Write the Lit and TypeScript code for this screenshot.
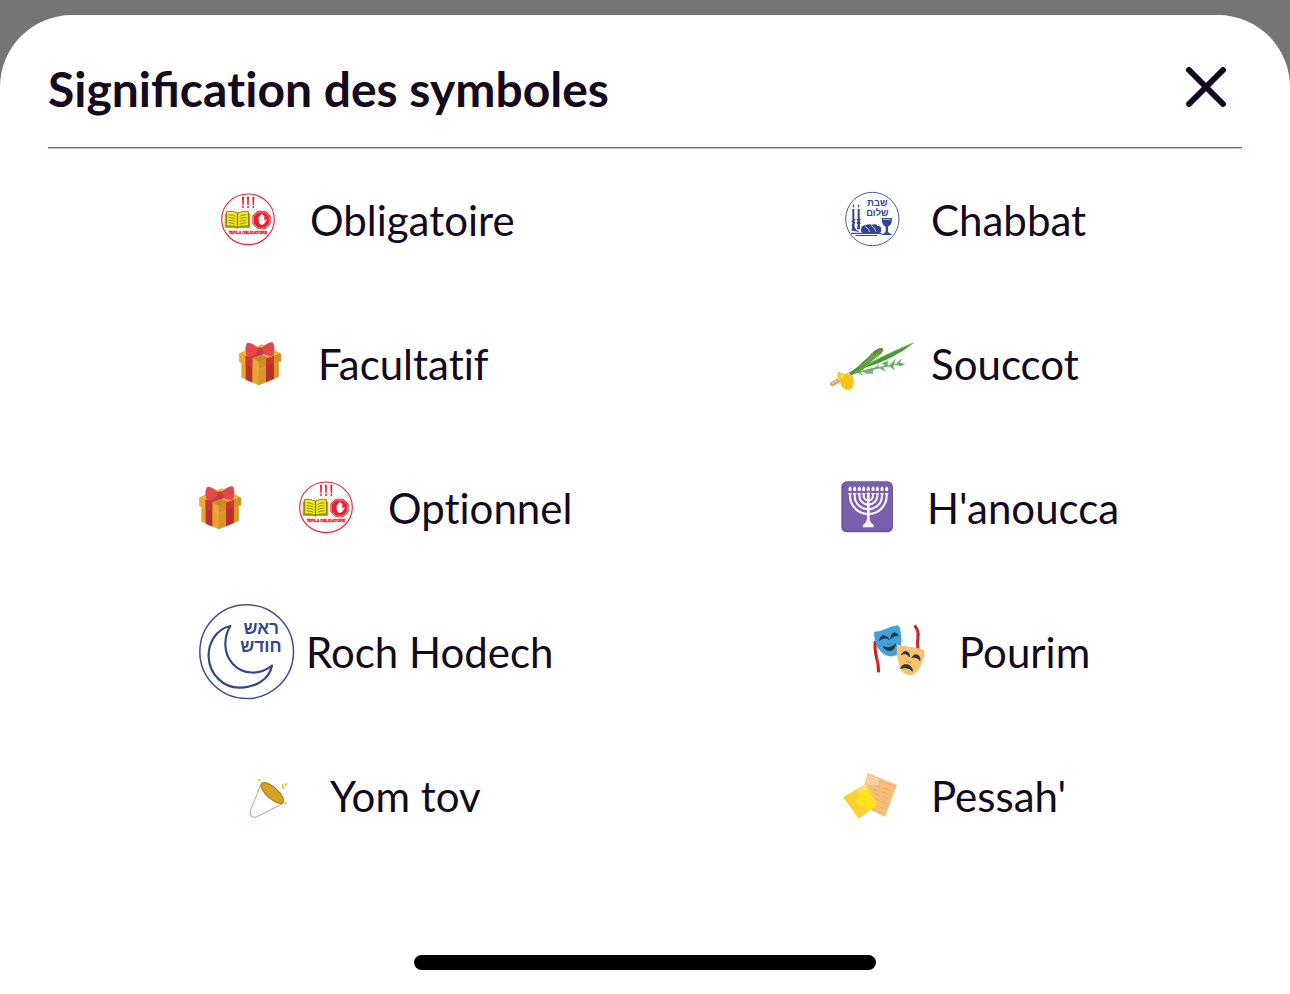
import { LitElement, html, svg, css } from "lit";
import { customElement } from "lit/decorators.js";

const frame = (viewBox: string, body: unknown) => html`
  <svg class="icon" viewBox=${viewBox} aria-hidden="true">${body}</svg>
`;

const tefila = () => frame("-30 -24 288 288", svg`
  <ellipse cx="114" cy="118" rx="79" ry="76" fill="#fff" stroke="#ea2637" stroke-width="3.5"/>
  <g fill="#e51f2f">
    <path d="M96 50h6l-1 25h-4zM111 50h6l-1 25h-4zM127 50h6l-1 25h-4z"/>
    <circle cx="99" cy="81" r="3"/><circle cx="114" cy="81" r="3"/><circle cx="130" cy="81" r="3"/>
    <path d="M143 92h23l16 16v23l-16 16h-23l-16-16v-23z"/>
  </g>
  <path d="M144 96h20l14 14v20l-14 14h-20l-14-14v-20z" fill="none" stroke="#fff" stroke-width="1.5"/>
  <path d="M146 124v-13q2-3 4 0v-5q2-4 4 0v-3q2-3 4 0v4q3-4 5 1v14l4-4q4-1 3 3l-8 11q-10 6-14-2z" fill="#fff"/>
  <path d="M44 101l6-2v-5q20-2 32 5q14-7 33-5v5l6 2v43H87q-5 5-10 0H44z" fill="#b7ab1b"/>
  <path d="M50 94q20-2 32 5v43q-13-7-32-4zM83 99q13-7 32-5v44q-19-3-32 4z" fill="#f6ed20" stroke="#5c5820" stroke-width="2"/>
  <path d="M56 104q10 0 20 5m-20 3q10 0 20 5m-20 3q10 0 20 5m-20 3q10 0 20 5M109 104q-10 0-20 5m20 3q-10 0-20 5m20 3q-10 0-20 5m20 3q-10 0-20 5" fill="none" stroke="#8f8820" stroke-width="3"/>
  <text x="114" y="163" class="stamp" text-anchor="middle">TEFILA OBLIGATOIRE</text>
`);

const chabbat = () => frame("-42 -24 288 288", svg`
  <circle cx="112" cy="117" r="80" fill="#fff" stroke="#4659a0" stroke-width="3"/>
  <text x="127" y="77" class="hebrew small" text-anchor="middle">שבת</text>
  <text x="127" y="107" class="hebrew small" text-anchor="middle">שלום</text>
  <g fill="#34468f">
    <path d="M55 72q5 7 0 12q-5-5 0-12zM71 72q5 7 0 12q-5-5 0-12z"/>
    <path d="M52 87h6v30h4l-4 6 3 6-3 5 2 10 7 8H49l3-8-2-10 3-5-3-6 4-6h-2zM68 87h6v30h4l-4 6 3 6-3 5 2 14H66l2-14-3-5 3-6-4-6h4z"/>
    <path d="M78 148q1-12 14-12q8-6 19-2q12-3 17 3q11 0 11 12q1 9-11 10H86q-10-2-8-11zM48 158h92v4H48zM62 165h65v3H62z"/>
    <path d="M140 114h31q0 22-12 26v15q2 6 11 7v3h-29v-3q9-1 11-7v-15q-12-5-12-26z"/>
  </g>
  <path d="M144 118h23M90 140q12 4 14 16M109 137q11 6 14 18" fill="none" stroke="#dfe4f5" stroke-width="2.5"/>
  <path d="M50 144q9 12 22 10" fill="none" stroke="#34468f" stroke-width="3"/>
`);

const gift = () => frame("-66 -42 288 288", svg`
  <path d="M34 96l52 19 60-22v47l-60 26-52-24z" fill="#e5a52f"/>
  <path d="M86 113l60-22v49l-60 26z" fill="#dc952b"/>
  <path d="M28 69l67-26 58 27v24l-67 22-58-20z" fill="#f0b63c"/>
  <path d="M28 69l58 25v22L28 96z" fill="#eaa934"/>
  <path d="M86 94l67-24v24l-67 22z" fill="#d48d28"/>
  <path d="M47 77l20 9v72l-20-9zM108 86l24-8v69l-24 10z" fill="#b9332d"/>
  <path d="M48 77l47-17 17 5-45 21z" fill="#c93a35"/>
  <path d="M65 85l27-11 25 9-29 12z" fill="#c98928"/>
  <path d="M47 77l20 9v25l-20-7zM108 86l24-8v20l-24 9z" fill="#c93830"/>
  <path d="M85 55C70 42 57 35 51 40c-7 10-6 30 1 39 12 4 22-6 33-10zM93 55c15-14 30-22 36-17 6 9 5 29-1 39-12 3-24-4-35-9z" fill="#e4484d"/>
  <path d="M82 54q9-5 16 0l5 16q-11 13-24 1z" fill="#c93a44"/>
`);

const souccot = () => frame("3 -42 288 288", svg`
  <path d="M29 158l65-35 7 9-61 37q-10 0-11-11z" fill="#d6a575"/>
  <path d="M35 161l55-31" fill="none" stroke="#f3d3ad" stroke-width="4" stroke-dasharray="7 4"/>
  <path d="M88 128l32-22 24-6-16 20-34 16z" fill="#5b8f3f"/>
  <g fill="#69ab64" stroke="#69ab64" stroke-width="1.5" stroke-linejoin="round">
    <path d="M105 130l52-15 90-15-90 19z"/>
    <path d="M149 118l10 11-1-12zM161 116l16-11-5 10zM178 113l18 11-8-12zM190 110l12-15 1 13zM207 107l16 13-5-14zM210 105l16-17-5 16zM225 104l18 3 11-4-15-4zM230 100l15-13-6 12zM128 123l16 10-6-12zM113 127l14 8-7-10zM138 119l7 11 14 0-12-10zM185 101l19-9-9 12z"/>
  </g>
  <path d="M97 130q22-30 50-50q14-20 30-25q15-3 13 6q-8 16-30 28q-26 27-54 40z" fill="#4f9239"/>
  <path d="M115 114l66-50M135 105l42-31M154 85l4-16M164 80l17-7" fill="none" stroke="#7fb552" stroke-width="3"/>
  <path d="M98 132q50-40 186-95q-62 51-148 76z" fill="#409a31"/>
  <path d="M104 127q75-46 174-87" fill="none" stroke="#78ba3e" stroke-width="3"/>
  <path d="M55 125q4-3 7 5 14 0 29 7l7-1q6 14 3 29-2 16-19 15-14-1-19-14l-4-18q-8-6-8-14z" fill="#f3cd18"/>
  <path d="M65 137q20 17 13 40M78 136q17 18 13 38M64 147q7 8 5 19" fill="none" stroke="#dfb115" stroke-width="2.5"/>
  <path d="M60 136l13 1-6 8z" fill="#ffe95b"/>
`);

const hanoucca = () => frame("-39 -30 288 288", svg`
  <rect x="34" y="34" width="155" height="153" rx="17" fill="#6b559f"/>
  <rect x="39" y="36" width="147" height="145" rx="14" fill="#7860ae"/>
  <g fill="none" stroke="#fbf3fb" stroke-width="6.5">
    <path d="M60 72v5a55 55 0 0 0 110 0v-5M74 72v5a41 41 0 0 0 82 0v-5M88 72v5a27 27 0 0 0 54 0v-5M101 72v5a14 14 0 0 0 28 0v-5"/>
    <path d="M115 68v95" stroke-width="8"/>
  </g>
  <g fill="#fbf3fb">
    ${[60, 74, 88, 101, 115, 129, 142, 156, 170].map((x) => svg`
      <path d=${`M${x} 49q8 8 3 14h-6q-5-6 3-14z`}/><rect x=${x - 5} y="69" width="10" height="4"/>
    `)}
    <path d="M111 143h8q1 14 8 18q5 2 5 11H98q0-9 5-11q7-4 8-18z"/>
  </g>
`);

const rochHodech = () => frame("18 27 288 288", svg`
  <circle cx="170" cy="170" r="140.500" fill="#fff" stroke="#3c4d99" stroke-width="4.500"/>
  <path d="M121 93C76 103 54 147 56 187c3 50 43 92 94 91 48-1 88-26 96-66-36 29-88 28-118-6-28-31-28-77-7-113z" fill="none" stroke="#34468f" stroke-width="6.500" stroke-linejoin="round"/>
  <text x="214" y="117" class="hebrew" text-anchor="middle">ראש</text>
  <text x="213" y="171" class="hebrew" text-anchor="middle">חודש</text>
`);

const pourim = () => frame("-48 -33 288 288", svg`
  <path d="M31 78q-3 26 3 46t7 48M149 31q13 18 10 34t0 38" fill="none" stroke="#c51f25" stroke-width="9"/>
  <path d="M36 92l2 58M156 42l1 54" stroke="#e2483e" stroke-width="2"/>
  <path d="M27 50q19 0 34-8t36-11q9 3 10 20 8 52-13 69-15 8-31 1Q28 103 27 50z" fill="#43a2dc"/>
  <path d="M43 78q4-19 16-16 11 3 14 12-9-7-16-4-8 1-14 8zM77 72q1-19 12-19 9 1 11 10-6-3-12 1-4 1-11 8zM54 94q20 9 38-7-4 20-18 20-14 0-20-13z" fill="#24363f" stroke="#24363f" stroke-width="2"/>
  <path d="M66 86q7 7 15-2" fill="none" stroke="#267db5" stroke-width="3"/>
  <path d="M96 88q20 6 41 8t39 8q6 10-1 28-16 47-38 49-20 0-31-19Q92 118 96 88z" fill="#f9c26d"/>
  <path d="M109 120q6-14 17-10 9 4 8 16-6-8-12-9-6-2-13 3zM140 128q8-13 18-8 9 5 7 17-6-9-12-9-7-2-13 0zM107 161q3-14 20-12 14 2 16 20-8-9-18-10-10-2-18 2z" fill="#28343a" stroke="#28343a" stroke-width="2"/>
  <path d="M123 139q7 4 15 4" fill="none" stroke="#cd913e" stroke-width="3"/>
`);

const yomTov = () => frame("-45 -51 288 288", svg`
  <path d="M78 58L46 137q-3 24 18 19l81-41" fill="#fff" stroke="#bd8962" stroke-width="2.5"/>
  <ellipse cx="112" cy="84" rx="43" ry="17" transform="rotate(42 112 84)" fill="#d5a122" stroke="#a77522" stroke-width="3"/>
  <path d="M142 57l4 15M155 54l-4 9" stroke="#edbd28" stroke-width="5"/>
  <circle cx="73" cy="45" r="4" fill="#f7c92f"/><circle cx="151" cy="114" r="4" fill="#f7c92f"/>
`);

const pessah = () => frame("-42 -42 288 288", svg`
  <path d="M98 33l88 36-36 95-78-37z" fill="#f6bd7c"/>
  <path d="M102 47l15 5m10 3l15 6m10 3l19 7M96 60l15 5m9 4l15 5m10 4l22 9M112 80l16 6m12 4l20 7M119 95l15 6m9 3l16 6M120 111l14 5m8 4l11 4M115 127l13 5m7 4l10 4M107 138l14 7m9 4l12 5" stroke="#eba96c" stroke-width="3"/>
  <path d="M98 36l36 15-3 20-40-4z" fill="#fad9b3" opacity="0.7"/>
  <path d="M91 67l37 62-57 41-47-65z" fill="#fdcf37"/>
  <path d="M78 78l13-11 37 62-29 15-36-22z" fill="#ffe51b"/>
  <path d="M66 85l25-18 8 13-31 12z" fill="#fbe083"/>
  <path d="M76 100l20 7m-23 6l22 9m0-27l15 8m-10 8l15 6" stroke="#f3d921" stroke-width="2.5"/>
`);

interface Entry {
  label: string;
  indent: string;
  icons: Array<() => unknown>;
}

const columns: Entry[][] = [
  [
    { label: "Obligatoire", indent: "indent-152", icons: [tefila] },
    { label: "Facultatif", indent: "indent-160", icons: [gift] },
    { label: "Optionnel", indent: "indent-120", icons: [gift, tefila] },
    { label: "Roch Hodech", indent: "indent-148", icons: [rochHodech] },
    { label: "Yom tov", indent: "indent-172", icons: [yomTov] },
  ],
  [
    { label: "Chabbat", indent: "indent-176", icons: [chabbat] },
    { label: "Souccot", indent: "indent-176", icons: [souccot] },
    { label: "H'anoucca", indent: "indent-172", icons: [hanoucca] },
    { label: "Pourim", indent: "indent-204", icons: [pourim] },
    { label: "Pessah'", indent: "indent-176", icons: [pessah] },
  ],
];

@customElement("app-root")
export class AppRoot extends LitElement {
  static styles = css`
    :host {
      display: flex;
      box-sizing: border-box;
      min-height: 100vh;
      padding-top: 15px;
      background: #757575;
      color: #150920;
      font-family: Lato, "Open Sans", sans-serif;
    }
    .sheet {
      flex: 1;
      box-sizing: border-box;
      display: flex;
      flex-direction: column;
      padding: 36px 48px 24px;
      border-radius: 72px 72px 0 0;
      background: #fff;
    }
    .header {
      display: flex;
      align-items: center;
      justify-content: space-between;
      padding-bottom: 24px;
      border-bottom: 1px solid #9c3fb5;
      box-shadow: 0 1px 0 #dcc0e6;
    }
    .title {
      margin: 0;
      padding-top: 4px;
      font-size: 48px;
      line-height: 60px;
      font-weight: 700;
    }
    .plain {
      font-variant-ligatures: none;
    }
    .close {
      width: 72px;
      height: 72px;
      padding: 0;
      border: 0;
      background: none;
      color: inherit;
      cursor: pointer;
    }
    .close-icon {
      display: block;
      width: 100%;
      height: 100%;
    }
    .legend {
      display: grid;
      grid-template-columns: 1fr 1fr;
      padding: 24px 0 48px;
    }
    .column {
      display: flex;
      flex-direction: column;
      gap: 48px;
      margin: 0;
      padding: 0;
      list-style: none;
    }
    .entry {
      display: flex;
      align-items: center;
      gap: 14px;
      white-space: nowrap;
    }
    .indent-120 { padding-left: 120px; }
    .indent-148 { padding-left: 148px; }
    .indent-152 { padding-left: 152px; }
    .indent-160 { padding-left: 160px; }
    .indent-172 { padding-left: 172px; }
    .indent-176 { padding-left: 176px; }
    .indent-204 { padding-left: 204px; }
    .icon {
      flex: none;
      width: 96px;
      height: 96px;
      overflow: visible;
    }
    .label {
      font-size: 42px;
      line-height: 52px;
      font-variant-ligatures: none;
    }
    .hebrew {
      font: 700 52px "Liberation Sans", "DejaVu Sans", sans-serif;
      fill: #34468f;
    }
    .small {
      font-size: 28px;
    }
    .stamp {
      font: 700 11px "Liberation Sans", sans-serif;
      fill: #e51f2f;
      stroke: #e51f2f;
      stroke-width: 1px;
    }
    .home-bar {
      align-self: center;
      width: 462px;
      max-width: 100%;
      height: 15px;
      margin-top: auto;
      border-radius: 8px;
      background: #000;
    }
  `;

  render() {
    return html`
      <main class="sheet">
        <header class="header">
          <h1 class="title">Significa<span class="plain">tion</span> des symboles</h1>
          <button class="close" type="button" aria-label="Fermer">
            <svg class="close-icon" viewBox="0 0 72 72" aria-hidden="true">
              <path d="M19 19L53 53M53 19L19 53" fill="none" stroke="currentColor" stroke-width="6" stroke-linecap="round"/>
            </svg>
          </button>
        </header>
        <section class="legend">
          ${columns.map((entries) => html`
            <ul class="column">
              ${entries.map((entry) => html`
                <li class="entry ${entry.indent}">
                  ${entry.icons.map((icon) => icon())}
                  <span class="label">${entry.label}</span>
                </li>
              `)}
            </ul>
          `)}
        </section>
        <div class="home-bar"></div>
      </main>
    `;
  }
}
